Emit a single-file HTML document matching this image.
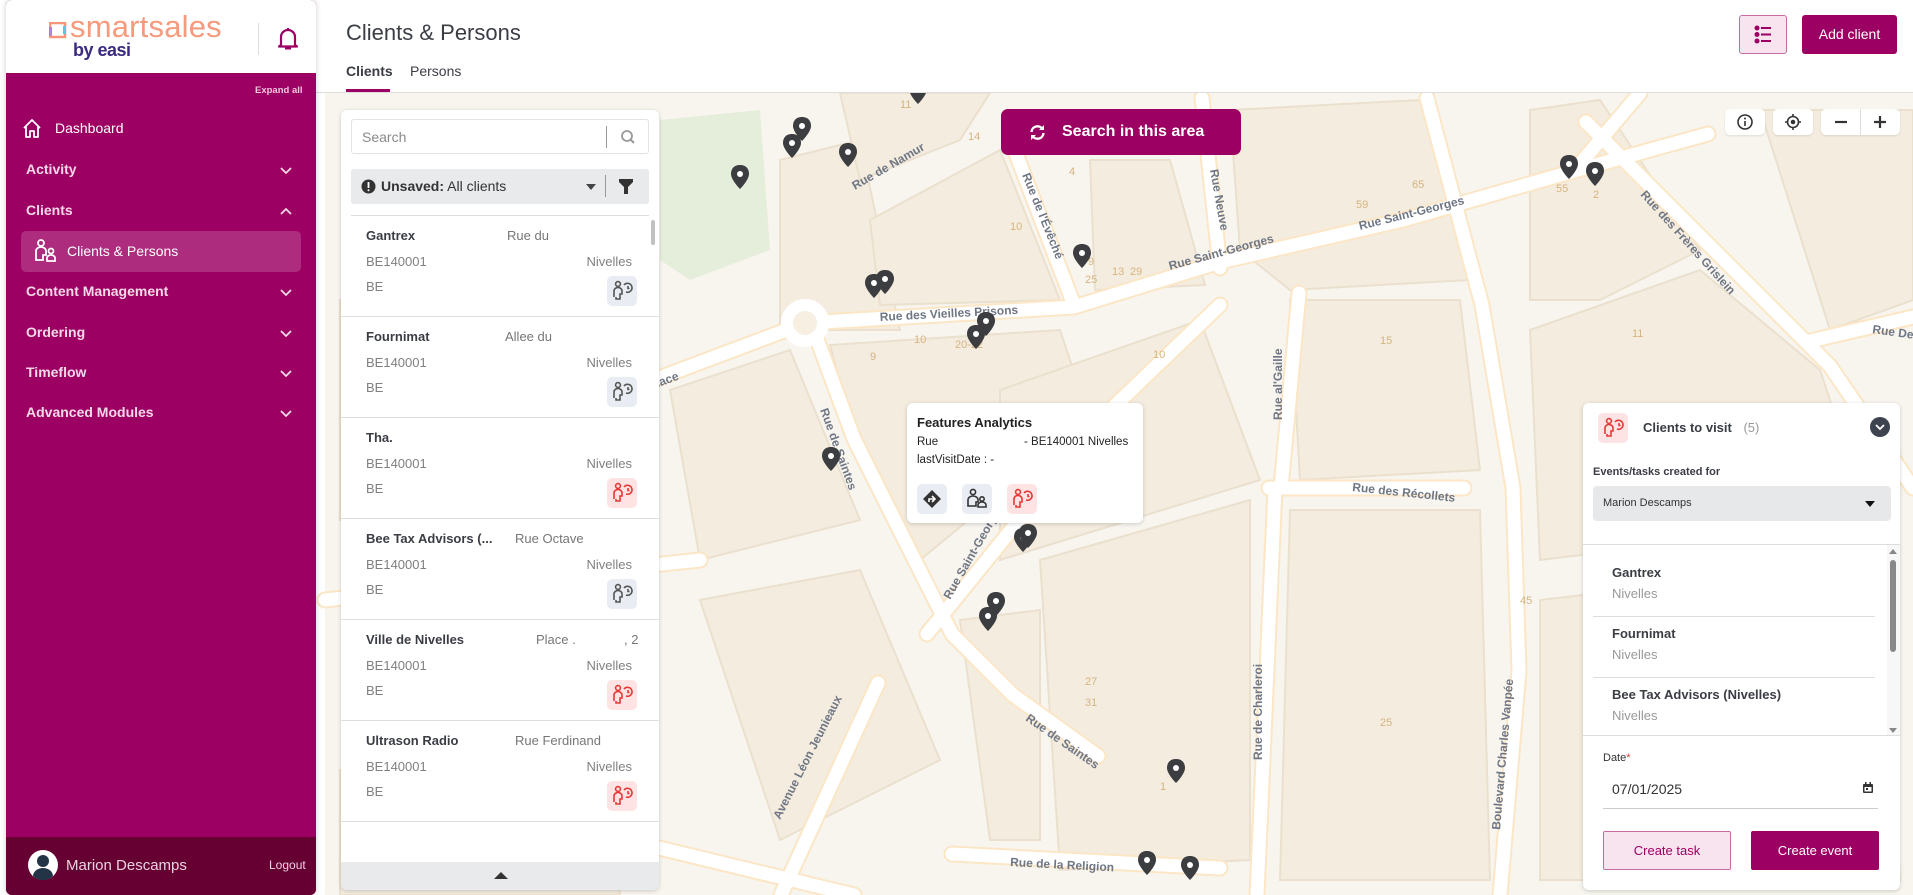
<!DOCTYPE html>
<html><head><meta charset="utf-8">
<style>
*{box-sizing:border-box;margin:0;padding:0}
body{width:1913px;height:895px;overflow:hidden;background:#fff;font-family:"Liberation Sans",Arial,sans-serif;position:relative;color:#333}
.abs{position:absolute}
.side{left:6px;top:0;width:310px;height:895px;background:#9c0062;border-radius:6px;overflow:hidden;box-shadow:0 0 6px rgba(0,0,0,.2)}
.sidehead{left:0;top:0;width:310px;height:73px;background:#fff}
.nav{position:absolute;left:20px;color:#f5d8e8;font-size:14px;font-weight:bold}
.chev{position:absolute;left:273px;width:14px;height:14px}
.card{background:#fff;border-radius:6px;box-shadow:0 1px 4px rgba(0,0,0,.18)}
.item{position:absolute;left:0;width:318px;height:101px;border-bottom:1px solid #ddd}
.item .n{position:absolute;left:25px;top:12px;font-size:13px;font-weight:bold;color:#3a3d44}
.item .a{position:absolute;top:12px;font-size:13px;color:#777}
.item .c{position:absolute;left:25px;top:38px;font-size:13px;color:#808080}
.item .r{position:absolute;right:27px;top:38px;font-size:13px;color:#808080}
.item .b{position:absolute;left:25px;top:63px;font-size:13px;color:#808080}
.item .ic{position:absolute;left:266px;top:60px;width:30px;height:30px;border-radius:5px}
.g{background:#e9edf3}.rd{background:#fde3e3}
.ctl{background:#fff;border-radius:5px;position:absolute;top:109px;height:26px;box-shadow:0 1px 2px rgba(0,0,0,.1)}
</style></head><body>

<!-- MAP -->
<svg class="abs" style="left:0;top:0" width="1913" height="895" viewBox="0 0 1913 895">
<defs>
<g id="pin"><path d="M0,0 c-7,0 -9,5 -9,9 c0,6 9,15 9,15 c0,0 9,-9 9,-15 c0,-4 -2,-9 -9,-9z"/><circle cx="0" cy="9" r="3" fill="#fff"/></g>
</defs>
<rect x="325" y="93" width="1588" height="802" fill="#f8f5ef"/>
<g fill="#f3ecdf" stroke="#ebe0ce" stroke-width="2">
<polygon points="780,160 860,140 900,330 780,330"/>
<polygon points="840,93 990,93 960,140 860,180"/>
<polygon points="870,220 1000,150 1060,300 880,305"/>
<polygon points="1090,160 1170,160 1205,285 1095,290"/>
<polygon points="1230,110 1420,100 1470,280 1290,290 1240,250"/>
<polygon points="830,345 1060,330 1090,420 920,560 860,460"/>
<polygon points="670,390 790,350 860,520 700,560"/>
<polygon points="1000,390 1200,320 1260,480 1000,560"/>
<polygon points="1290,300 1460,300 1480,470 1300,480"/>
<polygon points="1290,510 1480,510 1490,880 1280,880"/>
<polygon points="1040,560 1250,500 1250,860 1060,870"/>
<polygon points="960,620 1040,610 1040,840 990,840"/>
<polygon points="700,600 860,570 940,760 780,840"/>
<polygon points="420,560 620,520 650,720 420,760"/>
<polygon points="340,300 560,290 580,500 340,520"/>
<polygon points="1530,110 1600,100 1700,250 1600,300 1530,300"/>
<polygon points="1530,330 1700,270 1820,370 1870,520 1540,560"/>
<polygon points="1540,600 1880,560 1900,880 1540,880"/>
<polygon points="1760,110 1913,110 1913,300 1830,330"/>
<polygon points="340,770 600,760 620,895 340,895"/>
</g>
<path d="M660,120 L760,110 L770,250 L690,280 L660,260 Z" fill="#e5eddb"/>
<g fill="none" stroke-linecap="round" stroke-linejoin="round">
<g stroke="#fbe6c6" stroke-width="17">
<polyline points="659,378 805,323 1074,307 1220,262 1403,220 1574,171 1708,134"/>
<polyline points="811,323 854,439 903,537 952,634 1013,695 1098,756"/>
<polyline points="1013,146 1074,305"/>
<polyline points="1220,305 1100,420 927,634"/>
<polyline points="1427,98 1482,305 1513,488 1519,671 1500,895"/>
<polyline points="1202,98 1220,268"/>
<polyline points="1299,293 1281,488"/>
<polyline points="1269,488 1464,488"/>
<polyline points="1275,488 1257,895"/>
<polyline points="878,683 781,895"/>
<polyline points="952,854 1220,868"/>
<polyline points="634,842 854,895"/>
<polyline points="1586,122 1708,244 1830,366 1913,488"/>
<polyline points="1806,342 1913,317"/>
<polyline points="1574,171 1640,93"/>
<polyline points="325,600 700,560"/>
</g>
<g stroke="#ffffff" stroke-width="13">
<polyline points="659,378 805,323 1074,307 1220,262 1403,220 1574,171 1708,134"/>
<polyline points="811,323 854,439 903,537 952,634 1013,695 1098,756"/>
<polyline points="1013,146 1074,305"/>
<polyline points="1220,305 1100,420 927,634"/>
<polyline points="1427,98 1482,305 1513,488 1519,671 1500,895"/>
<polyline points="1202,98 1220,268"/>
<polyline points="1299,293 1281,488"/>
<polyline points="1269,488 1464,488"/>
<polyline points="1275,488 1257,895"/>
<polyline points="878,683 781,895"/>
<polyline points="952,854 1220,868"/>
<polyline points="634,842 854,895"/>
<polyline points="1586,122 1708,244 1830,366 1913,488"/>
<polyline points="1806,342 1913,317"/>
<polyline points="1574,171 1640,93"/>
<polyline points="325,600 700,560"/>
</g>
<circle cx="805" cy="323" r="18" stroke="#fff" stroke-width="12" fill="#f6efe2"/>
</g>
<g font-family="Liberation Sans,sans-serif" font-size="12" font-weight="bold" fill="#6f7684">
<text x="880" y="321" transform="rotate(-3 880 321)">Rue des Vieilles Prisons</text>
<text x="1170" y="270" transform="rotate(-15 1170 270)">Rue Saint-Georges</text>
<text x="1360" y="230" transform="rotate(-14 1360 230)">Rue Saint-Georges</text>
<text x="1352" y="491" transform="rotate(6 1352 491)">Rue des Récollets</text>
<text x="1500" y="830" transform="rotate(-85 1500 830)">Boulevard Charles Vanpée</text>
<text x="1262" y="760" transform="rotate(-90 1262 760)">Rue de Charleroi</text>
<text x="1282" y="420" transform="rotate(-90 1282 420)">Rue al'Gaille</text>
<text x="780" y="820" transform="rotate(-63 780 820)">Avenue Léon Jeunieaux</text>
<text x="1010" y="866" transform="rotate(3 1010 866)">Rue de la Religion</text>
<text x="855" y="190" transform="rotate(-30 855 190)">Rue de Namur</text>
<text x="1022" y="175" transform="rotate(68 1022 175)">Rue de l'Évêché</text>
<text x="1210" y="170" transform="rotate(80 1210 170)">Rue Neuve</text>
<text x="820" y="410" transform="rotate(70 820 410)">Rue de Saintes</text>
<text x="1025" y="720" transform="rotate(35 1025 720)">Rue de Saintes</text>
<text x="1640" y="195" transform="rotate(48 1640 195)">Rue des Frères Grislein</text>
<text x="1872" y="333" transform="rotate(8 1872 333)">Rue Delfos</text>
<text x="950" y="600" transform="rotate(-60 950 600)">Rue Saint-Georges</text>
<text x="650" y="390" transform="rotate(-20 650 390)">Place</text>
</g>
<g font-family="Liberation Sans,sans-serif" font-size="11" fill="#d6b47f">
<text x="900" y="108">11</text><text x="968" y="140">14</text><text x="1069" y="175">4</text><text x="1010" y="230">10</text>
<text x="1088" y="265">9</text><text x="1112" y="275">13</text><text x="1085" y="283">25</text><text x="1130" y="275">29</text>
<text x="955" y="348">20-22</text><text x="914" y="343">10</text><text x="870" y="360">9</text><text x="1153" y="358">10</text>
<text x="1356" y="208">59</text><text x="1412" y="188">65</text><text x="1556" y="192">55</text><text x="1593" y="198">2</text>
<text x="1632" y="337">11</text><text x="1654" y="415">19</text><text x="1380" y="344">15</text><text x="1520" y="604">45</text>
<text x="1085" y="685">27</text><text x="1085" y="706">31</text><text x="1380" y="726">25</text><text x="1160" y="790">1</text>
</g>
<g fill="#3c3d40">
<use href="#pin" x="918" y="80"/><use href="#pin" x="802" y="117"/><use href="#pin" x="792" y="134"/><use href="#pin" x="848" y="143"/>
<use href="#pin" x="740" y="165"/><use href="#pin" x="874" y="274"/><use href="#pin" x="885" y="270"/><use href="#pin" x="1082" y="244"/>
<use href="#pin" x="986" y="312"/><use href="#pin" x="976" y="325"/><use href="#pin" x="831" y="447"/><use href="#pin" x="1023" y="528"/>
<use href="#pin" x="1028" y="524"/><use href="#pin" x="996" y="592"/><use href="#pin" x="988" y="607"/><use href="#pin" x="1176" y="759"/>
<use href="#pin" x="1147" y="851"/><use href="#pin" x="1190" y="856"/><use href="#pin" x="1569" y="155"/><use href="#pin" x="1595" y="162"/>
</g>
</svg>

<!-- Header -->
<div class="abs" style="left:316px;top:0;width:1597px;height:93px;background:#fff;border-bottom:1px solid #ddd"></div>
<div class="abs" style="left:346px;top:20px;font-size:22px;color:#3a3d44">Clients &amp; Persons</div>
<div class="abs" style="left:346px;top:63px;font-size:14px;font-weight:bold;color:#3a3d44">Clients</div>
<div class="abs" style="left:410px;top:63px;font-size:14px;color:#3a3d44">Persons</div>
<div class="abs" style="left:346px;top:89px;width:44px;height:3px;background:#9c0062"></div>
<div class="abs" style="left:1739px;top:15px;width:48px;height:39px;background:#f7e4ef;border:1px solid #c96ba0;border-radius:3px">
<svg width="46" height="37" viewBox="0 0 46 37"><g fill="#9c0062"><circle cx="17" cy="12" r="2.5"/><circle cx="17" cy="18.5" r="2.5"/><circle cx="17" cy="25" r="2.5"/><rect x="21" y="11" width="10" height="2"/><rect x="21" y="17.5" width="10" height="2"/><rect x="21" y="24" width="10" height="2"/></g></svg></div>
<div class="abs" style="left:1802px;top:15px;width:95px;height:39px;background:#9c0062;border-radius:3px;color:#fff;font-size:14px;text-align:center;line-height:39px">Add client</div>

<!-- Sidebar -->
<div class="abs side">
<div class="abs sidehead">
<svg class="abs" style="left:43px;top:22px" width="18" height="17"><rect x="1" y="1" width="15" height="14" fill="none" stroke="#f4967a" stroke-width="2.5"/><rect x="0" y="5" width="3" height="9" fill="#b084d0"/><rect x="14" y="4" width="3" height="8" fill="#5cc8e0"/></svg>
<div class="abs" style="left:64px;top:9px;font-size:31px;color:#f59a7c;letter-spacing:0.2px">smartsales</div>
<div class="abs" style="left:67px;top:40px;font-size:18px;font-weight:bold;color:#3b2a80;letter-spacing:-0.5px">by easi</div>
<div class="abs" style="left:252px;top:23px;width:1px;height:32px;background:#ddd"></div>
<svg class="abs" style="left:271px;top:27px" width="22" height="24" viewBox="0 0 22 24"><path d="M4,18 L4,10 a7,7 0 0 1 14,0 L18,18 L20,19.5 L2,19.5 Z" fill="none" stroke="#9c0062" stroke-width="2.2" stroke-linejoin="round"/><path d="M8,21.5 h6" stroke="#9c0062" stroke-width="2"/><rect x="10" y="1" width="2" height="3" fill="#9c0062"/></svg>
</div>
<div class="abs" style="left:249px;top:85px;font-size:9.5px;font-weight:bold;color:#f0c8dd">Expand all</div>
<svg class="abs" style="left:15px;top:117px" width="22" height="22" viewBox="0 0 22 22"><path d="M3,11 L11,3 L19,11 M5,9 V20 H9 V14 H13 V20 H17 V9" fill="none" stroke="#fff" stroke-width="1.8" stroke-linejoin="round"/></svg>
<div class="abs" style="left:49px;top:120px;font-size:14px;color:#fff">Dashboard</div>
<div class="nav" style="top:161px">Activity</div>
<div class="nav" style="top:202px">Clients</div>
<div class="abs" style="left:15px;top:231px;width:280px;height:41px;background:#ae2c7e;border-radius:5px"></div>
<svg class="abs" style="left:28px;top:238px" width="24" height="26" viewBox="0 0 24 26"><g fill="none" stroke="#fff" stroke-width="1.8"><circle cx="7" cy="5" r="3"/><path d="M2,22 V13 a5,4 0 0 1 10,0 V17 H9 V22 Z"/><circle cx="17" cy="13" r="2.5"/><path d="M13,23 V20 a4,3 0 0 1 8,0 V23 Z"/></g></svg>
<div class="abs" style="left:61px;top:243px;font-size:14px;color:#fff">Clients &amp; Persons</div>
<div class="nav" style="top:283px">Content Management</div>
<div class="nav" style="top:324px">Ordering</div>
<div class="nav" style="top:364px">Timeflow</div>
<div class="nav" style="top:404px">Advanced Modules</div>
<svg class="chev" style="top:163px" viewBox="0 0 14 14"><path d="M2,5 L7,10 L12,5" fill="none" stroke="#f5d8e8" stroke-width="1.8"/></svg>
<svg class="chev" style="top:204px" viewBox="0 0 14 14"><path d="M2,10 L7,5 L12,10" fill="none" stroke="#f5d8e8" stroke-width="1.8"/></svg>
<svg class="chev" style="top:285px" viewBox="0 0 14 14"><path d="M2,5 L7,10 L12,5" fill="none" stroke="#f5d8e8" stroke-width="1.8"/></svg>
<svg class="chev" style="top:326px" viewBox="0 0 14 14"><path d="M2,5 L7,10 L12,5" fill="none" stroke="#f5d8e8" stroke-width="1.8"/></svg>
<svg class="chev" style="top:366px" viewBox="0 0 14 14"><path d="M2,5 L7,10 L12,5" fill="none" stroke="#f5d8e8" stroke-width="1.8"/></svg>
<svg class="chev" style="top:406px" viewBox="0 0 14 14"><path d="M2,5 L7,10 L12,5" fill="none" stroke="#f5d8e8" stroke-width="1.8"/></svg>
<div class="abs" style="left:0;top:837px;width:310px;height:58px;background:#660033"></div>
<svg class="abs" style="left:22px;top:850px" width="30" height="30" viewBox="0 0 30 30"><circle cx="15" cy="15" r="15" fill="#fff"/><circle cx="15" cy="11" r="6" fill="#243447"/><path d="M5,26 a10,8 0 0 1 20,0 a14,14 0 0 1 -20,0z" fill="#243447"/></svg>
<div class="abs" style="left:60px;top:857px;font-size:15px;color:#ecd2e0">Marion Descamps</div>
<div class="abs" style="left:263px;top:858px;font-size:12px;color:#ecd2e0">Logout</div>
</div>

<!-- Search in this area -->
<div class="abs" style="left:1001px;top:109px;width:240px;height:46px;background:#9c0062;border-radius:7px;color:#fff;font-size:16px;font-weight:bold;line-height:46px">
<svg class="abs" style="left:28px;top:15px" width="17" height="17" viewBox="0 0 17 17"><g fill="none" stroke="#fff" stroke-width="2.4"><path d="M2.5,8 a6,6 0 0 1 11,-3"/><path d="M14.5,9 a6,6 0 0 1 -11,3"/></g><path d="M15,1 v5 h-5z M2,16 v-5 h5z" fill="#fff"/></svg>
<span style="position:absolute;left:61px">Search in this area</span></div>

<!-- Map controls -->
<div class="ctl" style="left:1725px;width:40px"><svg width="40" height="26"><circle cx="20" cy="13" r="7" fill="none" stroke="#333" stroke-width="1.6"/><rect x="19.2" y="12" width="1.6" height="5" fill="#333"/><circle cx="20" cy="9.5" r="1" fill="#333"/></svg></div>
<div class="ctl" style="left:1773px;width:40px"><svg width="40" height="26"><circle cx="20" cy="13" r="5.5" fill="none" stroke="#333" stroke-width="1.6"/><circle cx="20" cy="13" r="2.3" fill="#333"/><path d="M20,5 v3 M20,18 v3 M12,13 h3 M25,13 h3" stroke="#333" stroke-width="1.6"/></svg></div>
<div class="ctl" style="left:1821px;width:79px"><svg width="79" height="26"><path d="M14,13 h12" stroke="#333" stroke-width="2.2"/><rect x="39" y="0" width="1" height="26" fill="#ddd"/><path d="M53,13 h12 M59,7 v12" stroke="#333" stroke-width="2.2"/></svg></div>

<!-- List panel -->
<div class="abs card" style="left:341px;top:110px;width:318px;height:780px;overflow:hidden">
<div class="abs" style="left:10px;top:9px;width:298px;height:35px;border:1px solid #e3e3e3;border-radius:3px">
<span class="abs" style="left:10px;top:9px;font-size:14px;color:#8a8a8a">Search</span>
<div class="abs" style="left:254px;top:6px;width:1px;height:22px;background:#999"></div>
<svg class="abs" style="left:268px;top:9px" width="16" height="16"><circle cx="7" cy="7" r="5" fill="none" stroke="#999" stroke-width="1.8"/><path d="M10.5,10.5 L14,14" stroke="#999" stroke-width="2"/></svg>
</div>
<div class="abs" style="left:10px;top:59px;width:298px;height:35px;background:#e9eaec;border-radius:3px">
<svg class="abs" style="left:10px;top:10px" width="15" height="15"><circle cx="7.5" cy="7.5" r="7" fill="#333"/><rect x="6.6" y="3" width="1.8" height="6" fill="#fff"/><circle cx="7.5" cy="11.3" r="1" fill="#fff"/></svg>
<span class="abs" style="left:30px;top:9px;font-size:14px;color:#333"><b>Unsaved:</b> All clients</span>
<svg class="abs" style="left:234px;top:14px" width="12" height="8"><path d="M1,1 h10 l-5,6z" fill="#444"/></svg>
<div class="abs" style="left:254px;top:6px;width:1px;height:22px;background:#999"></div>
<svg class="abs" style="left:267px;top:9px" width="16" height="17"><path d="M1,1 h14 v3 l-5,5 v7 h-4 v-7 l-5,-5z" fill="#333"/></svg>
</div>
<div class="abs" style="left:10px;top:105px;width:298px;height:1px;background:#ddd"></div>
<div class="abs" style="left:310px;top:110px;width:4px;height:25px;background:#c1c1c1;border-radius:2px"></div>

<div class="item" style="top:106px;left:0"><span class="n">Gantrex</span><span class="a" style="left:166px">Rue du</span><span class="c">BE140001</span><span class="r">Nivelles</span><span class="b">BE</span><div class="ic g"><svg width="30" height="30"><g fill="none" stroke="#555" stroke-width="1.6"><circle cx="11" cy="8" r="2.4"/><path d="M7,21 v-6 a4,3.5 0 0 1 8,0 v3 h-2 v5 h-4 v-2"/><path d="M17,9 a4.5,4.5 0 1 1 2,7"/><path d="M21,10 v2.5 h1.5"/></g></svg></div></div>
<div class="item" style="top:207px"><span class="n">Fournimat</span><span class="a" style="left:164px">Allee du</span><span class="c">BE140001</span><span class="r">Nivelles</span><span class="b">BE</span><div class="ic g"><svg width="30" height="30"><g fill="none" stroke="#555" stroke-width="1.6"><circle cx="11" cy="8" r="2.4"/><path d="M7,21 v-6 a4,3.5 0 0 1 8,0 v3 h-2 v5 h-4 v-2"/><path d="M17,9 a4.5,4.5 0 1 1 2,7"/><path d="M21,10 v2.5 h1.5"/></g></svg></div></div>
<div class="item" style="top:308px"><span class="n">Tha.</span><span class="c">BE140001</span><span class="r">Nivelles</span><span class="b">BE</span><div class="ic rd"><svg width="30" height="30"><g fill="none" stroke="#e53935" stroke-width="1.6"><circle cx="11" cy="8" r="2.4"/><path d="M7,21 v-6 a4,3.5 0 0 1 8,0 v3 h-2 v5 h-4 v-2"/><path d="M17,9 a4.5,4.5 0 1 1 2,7"/><path d="M21,10 v2.5 h1.5"/></g></svg></div></div>
<div class="item" style="top:409px"><span class="n">Bee Tax Advisors (...</span><span class="a" style="left:174px">Rue Octave</span><span class="c">BE140001</span><span class="r">Nivelles</span><span class="b">BE</span><div class="ic g"><svg width="30" height="30"><g fill="none" stroke="#555" stroke-width="1.6"><circle cx="11" cy="8" r="2.4"/><path d="M7,21 v-6 a4,3.5 0 0 1 8,0 v3 h-2 v5 h-4 v-2"/><path d="M17,9 a4.5,4.5 0 1 1 2,7"/><path d="M21,10 v2.5 h1.5"/></g></svg></div></div>
<div class="item" style="top:510px"><span class="n">Ville de Nivelles</span><span class="a" style="left:195px">Place .</span><span class="a" style="left:283px">, 2</span><span class="c">BE140001</span><span class="r">Nivelles</span><span class="b">BE</span><div class="ic rd"><svg width="30" height="30"><g fill="none" stroke="#e53935" stroke-width="1.6"><circle cx="11" cy="8" r="2.4"/><path d="M7,21 v-6 a4,3.5 0 0 1 8,0 v3 h-2 v5 h-4 v-2"/><path d="M17,9 a4.5,4.5 0 1 1 2,7"/><path d="M21,10 v2.5 h1.5"/></g></svg></div></div>
<div class="item" style="top:611px"><span class="n">Ultrason Radio</span><span class="a" style="left:174px">Rue Ferdinand</span><span class="c">BE140001</span><span class="r">Nivelles</span><span class="b">BE</span><div class="ic rd"><svg width="30" height="30"><g fill="none" stroke="#e53935" stroke-width="1.6"><circle cx="11" cy="8" r="2.4"/><path d="M7,21 v-6 a4,3.5 0 0 1 8,0 v3 h-2 v5 h-4 v-2"/><path d="M17,9 a4.5,4.5 0 1 1 2,7"/><path d="M21,10 v2.5 h1.5"/></g></svg></div></div>
<div class="item" style="top:712px;border:none"><span class="c">BE140001</span><span class="r">Nivelles</span></div>
<div class="abs" style="left:0;top:752px;width:318px;height:28px;background:#e9eaec"><svg class="abs" style="left:152px;top:8px" width="16" height="10"><path d="M1,9 L8,2 L15,9z" fill="#333"/></svg></div>
</div>

<!-- Popup -->
<div class="abs card" style="left:907px;top:403px;width:236px;height:120px">
<div class="abs" style="left:10px;top:12px;font-size:13px;font-weight:bold;color:#222">Features Analytics</div>
<div class="abs" style="left:10px;top:33px;font-size:11.5px;color:#222">Rue</div>
<div class="abs" style="left:117px;top:33px;font-size:11.5px;color:#222">- BE140001 Nivelles</div>
<div class="abs" style="left:10px;top:51px;font-size:11.5px;color:#222">lastVisitDate : -</div>
<div class="abs g" style="left:10px;top:81px;width:30px;height:30px;border-radius:5px"><svg width="30" height="30"><path d="M15,6 L24,15 L15,24 L6,15z" fill="#333"/><path d="M12,18 v-3 h5 M15,12 l3,3 l-3,3" fill="none" stroke="#fff" stroke-width="1.6"/></svg></div>
<div class="abs g" style="left:55px;top:81px;width:30px;height:30px;border-radius:5px"><svg width="30" height="30"><g fill="none" stroke="#333" stroke-width="1.6"><circle cx="11" cy="8" r="2.6"/><path d="M6,22 v-6 a5,4 0 0 1 10,0 v2 h-2 v4 Z"/><circle cx="20" cy="15" r="2.2"/><path d="M16,23 v-2 a4,3 0 0 1 8,0 v2 Z"/></g></svg></div>
<div class="abs rd" style="left:100px;top:81px;width:30px;height:30px;border-radius:5px"><svg width="30" height="30"><g fill="none" stroke="#e53935" stroke-width="1.6"><circle cx="11" cy="8" r="2.4"/><path d="M7,21 v-6 a4,3.5 0 0 1 8,0 v3 h-2 v5 h-4 v-2"/><path d="M17,9 a4.5,4.5 0 1 1 2,7"/><path d="M21,10 v2.5 h1.5"/></g></svg></div>
</div>

<!-- Clients to visit -->
<div class="abs card" style="left:1583px;top:403px;width:317px;height:487px;overflow:hidden">
<div class="abs rd" style="left:15px;top:10px;width:30px;height:30px;border-radius:5px"><svg width="30" height="30"><g fill="none" stroke="#e53935" stroke-width="1.6"><circle cx="11" cy="8" r="2.4"/><path d="M7,21 v-6 a4,3.5 0 0 1 8,0 v3 h-2 v5 h-4 v-2"/><path d="M17,9 a4.5,4.5 0 1 1 2,7"/><path d="M21,10 v2.5 h1.5"/></g></svg></div>
<div class="abs" style="left:60px;top:17px;font-size:13px;font-weight:bold;color:#3a3d44">Clients to visit <span style="font-weight:normal;color:#999;margin-left:8px">(5)</span></div>
<svg class="abs" style="left:287px;top:14px" width="20" height="20"><circle cx="10" cy="10" r="10" fill="#3e4350"/><path d="M6,8 L10,12 L14,8" fill="none" stroke="#fff" stroke-width="1.8"/></svg>
<div class="abs" style="left:10px;top:63px;font-size:11px;font-weight:bold;color:#3a3d44">Events/tasks created for</div>
<div class="abs" style="left:10px;top:83px;width:298px;height:35px;background:#e7e8ea;border-radius:4px"><span class="abs" style="left:10px;top:11px;font-size:11px;color:#333">Marion Descamps</span><svg class="abs" style="left:271px;top:14px" width="12" height="8"><path d="M1,1 h10 l-5,6z" fill="#111"/></svg></div>
<div class="abs" style="left:0;top:141px;width:317px;height:1px;background:#ddd"></div>
<div class="abs" style="left:29px;top:162px;font-size:13px;font-weight:bold;color:#3a3d44">Gantrex</div>
<div class="abs" style="left:29px;top:183px;font-size:13px;color:#999">Nivelles</div>
<div class="abs" style="left:10px;top:213px;width:282px;height:1px;background:#ddd"></div>
<div class="abs" style="left:29px;top:223px;font-size:13px;font-weight:bold;color:#3a3d44">Fournimat</div>
<div class="abs" style="left:29px;top:244px;font-size:13px;color:#999">Nivelles</div>
<div class="abs" style="left:10px;top:274px;width:282px;height:1px;background:#ddd"></div>
<div class="abs" style="left:29px;top:284px;font-size:13px;font-weight:bold;color:#3a3d44">Bee Tax Advisors (Nivelles)</div>
<div class="abs" style="left:29px;top:305px;font-size:13px;color:#999">Nivelles</div>
<div class="abs" style="left:304px;top:142px;width:13px;height:190px;background:#f7f7f7"></div>
<svg class="abs" style="left:305px;top:144px" width="10" height="188"><path d="M1,7 L5,2 L9,7z M1,181 L5,186 L9,181z" fill="#888"/><rect x="2" y="13" width="6" height="92" rx="3" fill="#888"/></svg>
<div class="abs" style="left:0;top:332px;width:317px;height:1px;background:#ddd"></div>
<div class="abs" style="left:20px;top:349px;font-size:11px;color:#333">Date<span style="color:#e53935">*</span></div>
<div class="abs" style="left:29px;top:378px;font-size:14px;color:#333">07/01/2025</div>
<svg class="abs" style="left:279px;top:379px" width="12" height="12"><rect x="1" y="2" width="10" height="9" rx="1" fill="#333"/><rect x="2.5" y="5" width="7" height="4.5" fill="#fff"/><rect x="3" y="0" width="1.5" height="3" fill="#333"/><rect x="7.5" y="0" width="1.5" height="3" fill="#333"/><rect x="4" y="6" width="2" height="2" fill="#333"/></svg>
<div class="abs" style="left:20px;top:405px;width:275px;height:1px;background:#ccc"></div>
<div class="abs" style="left:20px;top:428px;width:128px;height:39px;background:#f7e4ef;border:1px solid #c96ba0;border-radius:2px;color:#9c0062;font-size:13px;text-align:center;line-height:37px">Create task</div>
<div class="abs" style="left:168px;top:428px;width:128px;height:39px;background:#9c0062;border-radius:2px;color:#fff;font-size:13px;text-align:center;line-height:39px">Create event</div>
</div>
</body></html>
